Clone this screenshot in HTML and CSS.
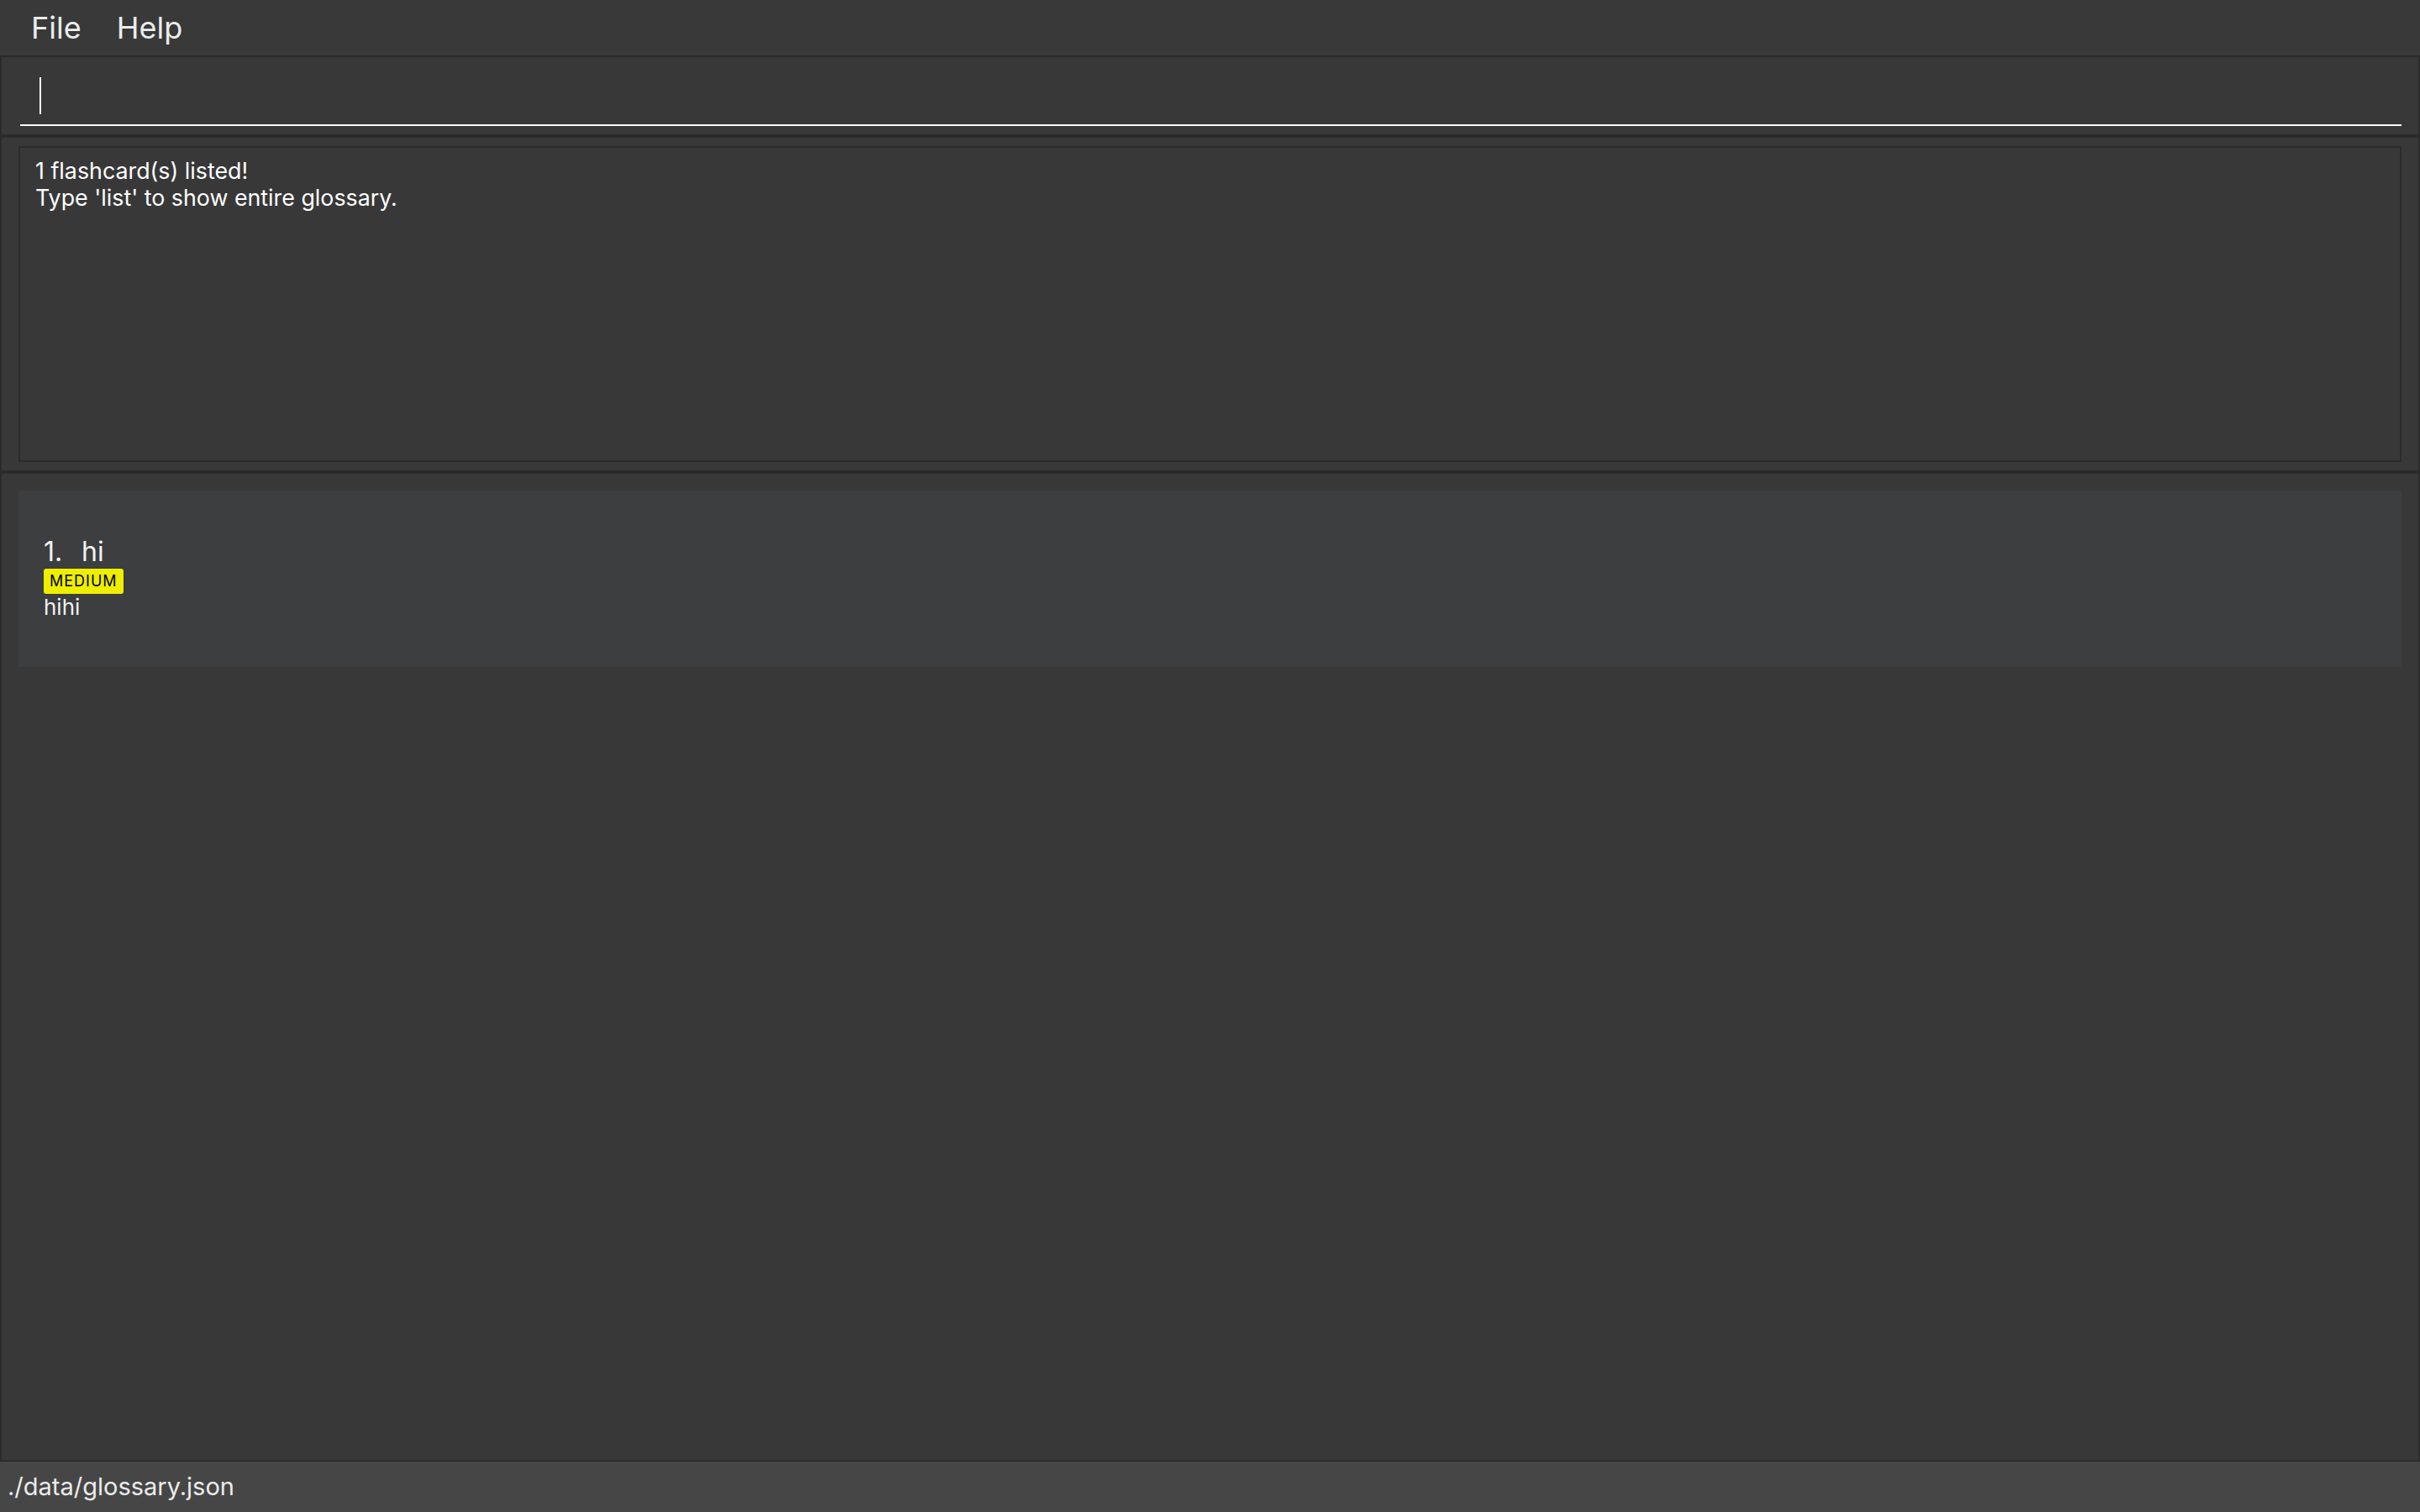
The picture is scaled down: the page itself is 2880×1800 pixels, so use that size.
FILE: index.html
```html
<!DOCTYPE html>
<html>
<head>
<meta charset="utf-8">
<link rel="stylesheet" href="styles.css">
</head>
<body>
<div class="app">
  <div class="menubar">
    <span class="menu-item">File</span>
    <span class="menu-item">Help</span>
  </div>
  <div class="main">
    <div class="command-pane">
      <div class="command-box">
        <span class="caret"></span>
      </div>
    </div>
    <div class="result-pane">
      <div class="result-box">
        <div class="result-line">1 flashcard(s) listed!</div>
        <div class="result-line">Type 'list' to show entire glossary.</div>
      </div>
    </div>
    <div class="list-pane">
      <div class="card">
        <div class="card-title"><span class="card-id">1.</span><span class="card-name">hi</span></div>
        <div class="tags"><span class="tag tag-medium">MEDIUM</span></div>
        <div class="card-desc">hihi</div>
      </div>
    </div>
  </div>
  <div class="statusbar">./data/glossary.json</div>
</div>
</body>
</html>
```
FILE: styles.css
```css
html, body {
  margin: 0;
  padding: 0;
  background: #383838;
}
body {
  width: 2880px;
  height: 1800px;
  overflow: hidden;
  font-family: Inter, "Open Sans", sans-serif;
  color: #ffffff;
}
.app {
  display: flex;
  flex-direction: column;
  height: 1800px;
}
.menubar {
  height: 66px;
  border-bottom: 2px solid #2b2b2b;
  background: #393939;
  display: flex;
  padding-left: 37px;
  gap: 42px;
}
.menu-item {
  font-size: 36px;
  line-height: 66px;
  color: #ececec;
}
.main {
  flex: 1;
  display: flex;
  flex-direction: column;
  border-left: 2px solid #2b2b2b;
  border-right: 2px solid #2b2b2b;
  border-bottom: 2px solid #2b2b2b;
  min-height: 0;
}
.command-pane {
  height: 96px;
  box-sizing: border-box;
  padding: 0 20px 10px 22px;
  border-bottom: 4px solid #2b2b2b;
  display: flex;
  flex-direction: column;
}
.command-box {
  flex: 1;
  border-bottom: 2px solid #ffffff;
  padding-left: 23px;
  padding-top: 24px;
  box-sizing: border-box;
}
.caret {
  display: block;
  width: 2px;
  height: 44px;
  background: #ffffff;
}
.result-pane {
  height: 400px;
  box-sizing: border-box;
  padding: 10px 20px;
  border-bottom: 4px solid #2b2b2b;
  display: flex;
}
.result-box {
  flex: 1;
  border: 2px solid #2b2b2b;
  padding: 11px 18px;
  font-size: 26.8px;
  line-height: 32px;
}
.list-pane {
  flex: 1;
  padding: 20px 20px;
  box-sizing: border-box;
}
.card {
  background: #3c3e3f;
  height: 210px;
  box-sizing: border-box;
  padding: 53px 30px 0 30px;
  display: flex;
  flex-direction: column;
}
.card-title {
  font-size: 32px;
  line-height: 40px;
  height: 40px;
  color: #f2f2f2;
}
.card-id {
  display: inline-block;
  width: 45px;
}
.tags {
  height: 30px;
  display: flex;
}
.tag {
  display: inline-block;
  height: 30px;
  line-height: 30px;
  padding: 0 7px;
  border-radius: 3px;
  font-size: 18px;
  letter-spacing: 1px;
  color: #000000;
}
.tag-medium {
  background: #eeee00;
}
.card-desc {
  font-size: 26px;
  line-height: 32px;
  color: #f2f2f2;
}
.statusbar {
  height: 60px;
  background: #464646;
  font-size: 29px;
  line-height: 60px;
  padding-left: 9px;
  color: #ececec;
}
```
